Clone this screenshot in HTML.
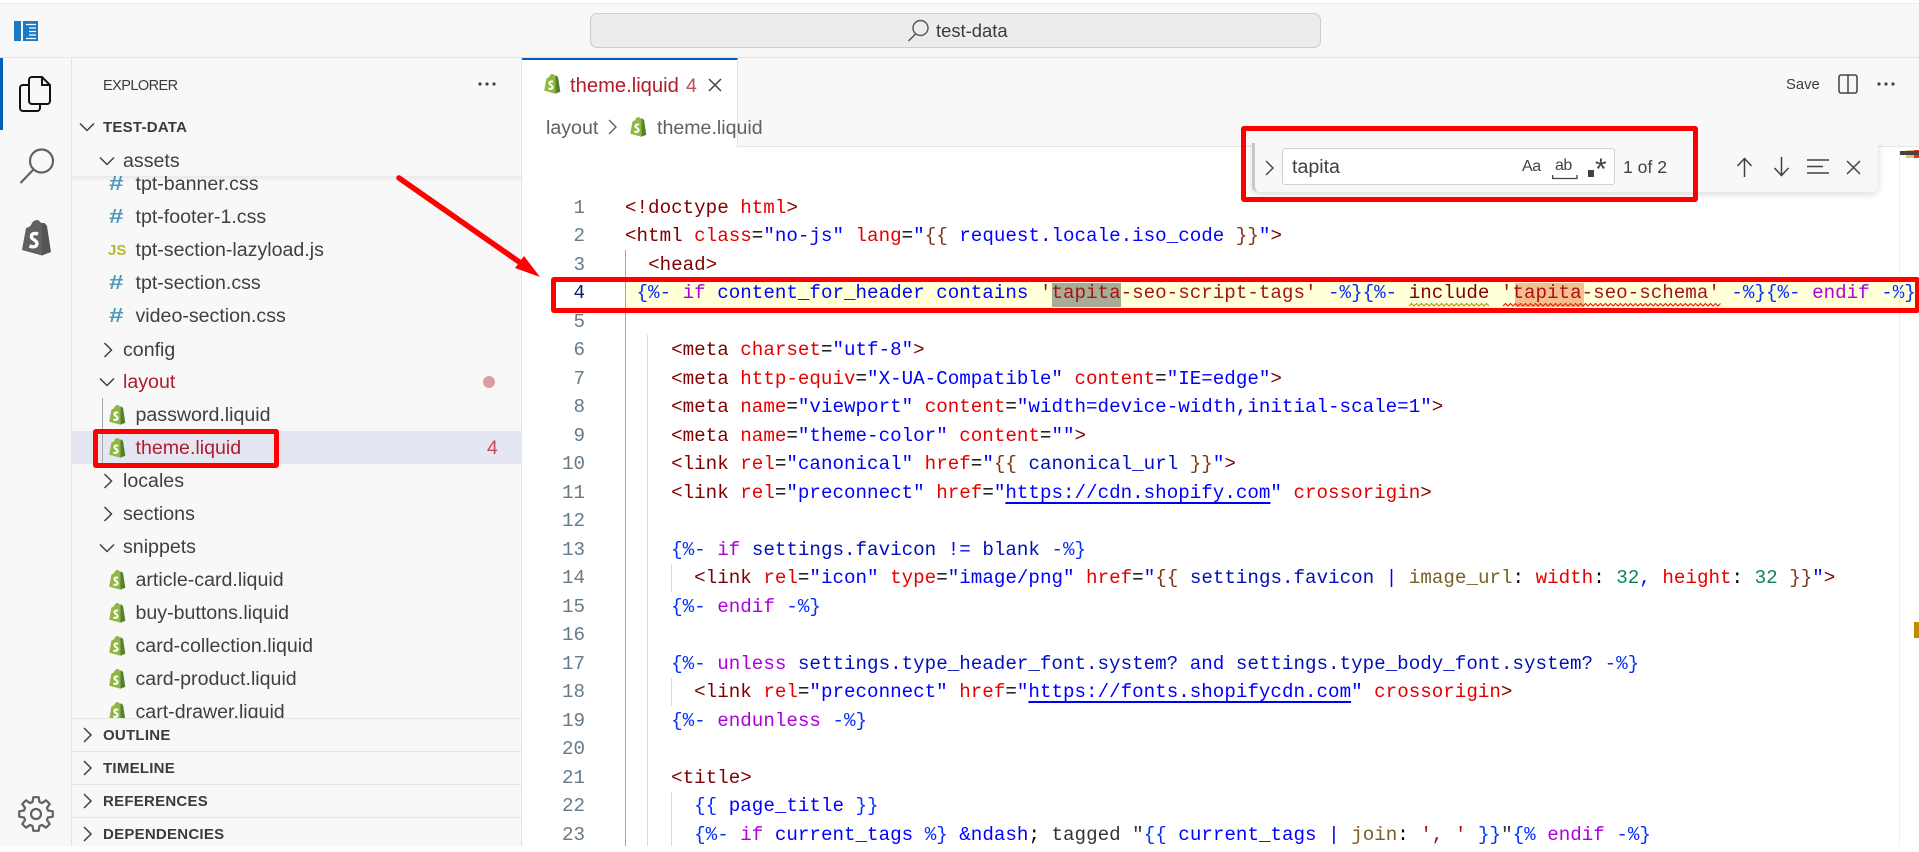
<!DOCTYPE html>
<html lang="en"><head><meta charset="utf-8"><title>test-data</title>
<style>
*{box-sizing:border-box}
html,body{margin:0;padding:0;width:1919px;height:846px;overflow:hidden;background:#fff;font-family:"Liberation Sans",sans-serif;color:#3b3b3b}
.a{position:absolute}
svg{position:absolute;overflow:visible}
.r{position:absolute;height:33px;line-height:35px;font-size:19.6px;white-space:pre;color:#3f3f3f}
.f{left:135.5px}.d{left:123px}
.red{color:#b01b2e}
.h{position:absolute;left:103px;height:33px;line-height:35px;font-size:15px;font-weight:bold;letter-spacing:.25px;color:#3b3b3b}
.hash{position:absolute;left:109px;height:33px;line-height:34px;font-size:20px;font-weight:bold;color:#519aba;transform:scaleX(1.3);transform-origin:left center}
.box{position:absolute;border:5px solid #f00;border-radius:3px}
.sec{position:absolute;left:72px;width:449px;height:33px;background:#f8f8f8;border-top:1px solid #e5e5e5}
#code,#nums{position:absolute;top:193.8px;font-family:"Liberation Mono",monospace;font-size:19.22px;line-height:28.5px;white-space:pre}
#code{left:625px;color:#000}
#nums{left:530px;width:55px;text-align:right;color:#667a88}
#code div,#nums div{height:28.5px}
.t{color:#800000}.e{color:#e50000}.s{color:#0000ff}.b{color:#0431fa}.k{color:#af00db}.v{color:#0010b8}.w{color:#7b3814}.q{color:#a31515}.n{color:#098658}.y{color:#795e26}
.u{text-decoration:underline;text-decoration-thickness:2px;text-underline-offset:4px}
.g{position:absolute;width:1px}
</style></head><body>

<!-- title bar -->
<div class="a" style="left:0;top:0;width:1919px;height:58px;background:#f8f8f8;border-bottom:1px solid #e5e5e5"></div>
<div class="a" style="left:0;top:0;width:1919px;height:3px;background:#fff"></div>
<div class="a" style="left:0;top:3px;width:1919px;height:1px;background:#fbe4ec"></div>
<svg style="left:14px;top:21px" width="24" height="20" viewBox="0 0 24 20"><rect width="7" height="20" fill="#1a7bc4"/><rect x="9" width="15" height="20" fill="#1a7bc4"/><path d="M12 3.5h10M15 7h7M15 10.5h7M15 14h7M12 17.5h10" stroke="#fff" stroke-width="1.2"/></svg>
<div class="a" style="left:590px;top:13px;width:731px;height:35px;background:#ececec;border:1px solid #cdcdcd;border-radius:7px"></div>
<svg style="left:905px;top:18px" width="28" height="26" viewBox="0 0 28 26"><circle cx="15.5" cy="10" r="7.5" fill="none" stroke="#555" stroke-width="1.4"/><path d="M10.5 16L3.5 23" stroke="#555" stroke-width="1.5"/></svg>
<div class="a" style="left:936px;top:13px;height:35px;line-height:36px;font-size:18.4px;color:#3b3b3b">test-data</div>

<!-- activity bar -->
<div class="a" style="left:0;top:58px;width:72px;height:788px;background:#f8f8f8;border-right:1px solid #e5e5e5"></div>
<div class="a" style="left:0;top:58px;width:3px;height:72px;background:#005fb8"></div>
<svg style="left:19px;top:76px" width="32" height="36" viewBox="0 0 32 36" fill="none" stroke="#111" stroke-width="2"><path d="M10 9H4a3 3 0 0 0-3 3V32a3 3 0 0 0 3 3H18a3 3 0 0 0 3-3V28"/><path d="M13 1H23L31 9V25a3 3 0 0 1-3 3H13a3 3 0 0 1-3-3V4a3 3 0 0 1 3-3Z"/><path d="M23 1V9H31"/></svg>
<svg style="left:19px;top:147px" width="36" height="38" viewBox="0 0 36 38" fill="none" stroke="#616161" stroke-width="2.2"><circle cx="22.5" cy="14" r="11.5"/><path d="M14 23L1.5 36"/></svg>
<svg style="left:21px;top:220px" width="30" height="36" viewBox="0 0 30 36"><path d="M1 30L5 8Q9 7 10 5Q12 0 16 0Q18 0 19 2L21 3V35.5Z" fill="#616161"/><path d="M21 3H23.5L26 6L30 32L21 35.5Z" fill="#555"/><path d="M17 14C13 12.5 10 14 10.5 17C11 20 16 20 16 23.5C16 27 12 27.5 8.5 26" fill="none" stroke="#fff" stroke-width="3.4"/></svg>
<svg style="left:18px;top:796px" width="36" height="36" viewBox="-18 -18 36 36" fill="none" stroke="#616161" stroke-width="2.2" stroke-linejoin="round"><path d="M12.02-3.45L16.79-2.66V2.66L12.02 3.45L10.93 6.06L13.75 9.99L9.99 13.75L6.06 10.93L3.45 12.02L2.66 16.79H-2.66L-3.45 12.02L-6.06 10.93L-9.99 13.75L-13.75 9.99L-10.93 6.06L-12.02 3.45L-16.79 2.66V-2.66L-12.02-3.45L-10.93-6.06L-13.75-9.99L-9.99-13.75L-6.06-10.93L-3.45-12.02L-2.66-16.79H2.66L3.45-12.02L6.06-10.93L9.99-13.75L13.75-9.99L10.93-6.06Z"/><circle r="5"/></svg>

<!-- sidebar -->
<div class="a" style="left:72px;top:58px;width:450px;height:788px;background:#f8f8f8;border-right:1px solid #e5e5e5"></div>
<div class="a" style="left:103px;top:68px;height:33px;line-height:36px;font-size:14.5px;letter-spacing:-.55px;color:#3b3b3b">EXPLORER</div>
<svg style="left:477px;top:81px" width="20" height="6"><circle cx="3" cy="3" r="1.6" fill="#424242"/><circle cx="10" cy="3" r="1.6" fill="#424242"/><circle cx="17" cy="3" r="1.6" fill="#424242"/></svg>

<div class="r f" style="top:167px">tpt-banner.css</div>
<div class="hash" style="top:167px">#</div>
<div class="r f" style="top:200px">tpt-footer-1.css</div>
<div class="hash" style="top:200px">#</div>
<div class="r f" style="top:233px">tpt-section-lazyload.js</div>
<div class="a" style="left:108px;top:234px;height:33px;line-height:33px;font-size:15px;font-weight:bold;color:#b8b82e">JS</div>
<div class="r f" style="top:266px">tpt-section.css</div>
<div class="hash" style="top:266px">#</div>
<div class="r f" style="top:299px">video-section.css</div>
<div class="hash" style="top:299px">#</div>

<!-- sticky header -->
<div class="a" style="left:72px;top:110px;width:449px;height:66px;background:#f8f8f8"></div>
<div class="a" style="left:72px;top:176px;width:449px;height:6px;background:linear-gradient(#0000000f,#00000000)"></div>
<div class="h" style="top:109.5px">TEST-DATA</div>
<svg style="left:79px;top:122px" width="16" height="10" fill="none" stroke="#424242" stroke-width="1.5"><path d="M1 1.5L8 8.5L15 1.5"/></svg>
<div class="r d" style="top:144px">assets</div>
<svg style="left:99px;top:156px" width="16" height="10" fill="none" stroke="#424242" stroke-width="1.5"><path d="M1 1.5L8 8.5L15 1.5"/></svg>

<div class="r d" style="top:333px">config</div>
<svg style="left:103px;top:342px" width="10" height="16" fill="none" stroke="#424242" stroke-width="1.5"><path d="M1.5 1L8.5 8L1.5 15"/></svg>
<div class="r d red" style="top:365px">layout</div>
<svg style="left:99px;top:377px" width="16" height="10" fill="none" stroke="#424242" stroke-width="1.5"><path d="M1 1.5L8 8.5L15 1.5"/></svg>
<div class="a" style="left:483px;top:375.5px;width:12px;height:12px;border-radius:50%;background:#dd9ca0"></div>

<div class="a" style="left:72px;top:431px;width:449px;height:33px;background:#e4e6f1"></div>
<div class="a" style="left:102px;top:398px;width:1px;height:67px;background:#a8a8a8"></div>
<div class="r f" style="top:398px">password.liquid</div>
<div class="r f red" style="top:431px">theme.liquid</div>
<div class="a" style="left:487px;top:431px;height:33px;line-height:35px;font-size:19.5px;color:#c24a52">4</div>
<svg style="left:108px;top:405px" width="18" height="20" viewBox="0 0 30 36"><path d="M1 30L5 8Q9 7 10 5Q12 0 16 0Q18 0 19 2L21 3V35.5Z" fill="#8fb83f"/><path d="M21 3H23.5L26 6L30 32L21 35.5Z" fill="#55802f"/><path d="M17 14C13 12.5 10 14 10.5 17C11 20 16 20 16 23.5C16 27 12 27.5 8.5 26" fill="none" stroke="#fff" stroke-width="3.6"/></svg>
<svg style="left:108px;top:438px" width="18" height="20" viewBox="0 0 30 36"><path d="M1 30L5 8Q9 7 10 5Q12 0 16 0Q18 0 19 2L21 3V35.5Z" fill="#8fb83f"/><path d="M21 3H23.5L26 6L30 32L21 35.5Z" fill="#55802f"/><path d="M17 14C13 12.5 10 14 10.5 17C11 20 16 20 16 23.5C16 27 12 27.5 8.5 26" fill="none" stroke="#fff" stroke-width="3.6"/></svg>

<div class="r d" style="top:464px">locales</div>
<svg style="left:103px;top:473px" width="10" height="16" fill="none" stroke="#424242" stroke-width="1.5"><path d="M1.5 1L8.5 8L1.5 15"/></svg>
<div class="r d" style="top:497px">sections</div>
<svg style="left:103px;top:506px" width="10" height="16" fill="none" stroke="#424242" stroke-width="1.5"><path d="M1.5 1L8.5 8L1.5 15"/></svg>
<div class="r d" style="top:530px">snippets</div>
<svg style="left:99px;top:543px" width="16" height="10" fill="none" stroke="#424242" stroke-width="1.5"><path d="M1 1.5L8 8.5L15 1.5"/></svg>

<div class="r f" style="top:563px">article-card.liquid</div>
<div class="r f" style="top:596px">buy-buttons.liquid</div>
<div class="r f" style="top:629px">card-collection.liquid</div>
<div class="r f" style="top:662px">card-product.liquid</div>
<div class="r f" style="top:695px">cart-drawer.liquid</div>
<svg style="left:108px;top:570px" width="18" height="20" viewBox="0 0 30 36"><path d="M1 30L5 8Q9 7 10 5Q12 0 16 0Q18 0 19 2L21 3V35.5Z" fill="#8fb83f"/><path d="M21 3H23.5L26 6L30 32L21 35.5Z" fill="#55802f"/><path d="M17 14C13 12.5 10 14 10.5 17C11 20 16 20 16 23.5C16 27 12 27.5 8.5 26" fill="none" stroke="#fff" stroke-width="3.6"/></svg>
<svg style="left:108px;top:603px" width="18" height="20" viewBox="0 0 30 36"><path d="M1 30L5 8Q9 7 10 5Q12 0 16 0Q18 0 19 2L21 3V35.5Z" fill="#8fb83f"/><path d="M21 3H23.5L26 6L30 32L21 35.5Z" fill="#55802f"/><path d="M17 14C13 12.5 10 14 10.5 17C11 20 16 20 16 23.5C16 27 12 27.5 8.5 26" fill="none" stroke="#fff" stroke-width="3.6"/></svg>
<svg style="left:108px;top:636px" width="18" height="20" viewBox="0 0 30 36"><path d="M1 30L5 8Q9 7 10 5Q12 0 16 0Q18 0 19 2L21 3V35.5Z" fill="#8fb83f"/><path d="M21 3H23.5L26 6L30 32L21 35.5Z" fill="#55802f"/><path d="M17 14C13 12.5 10 14 10.5 17C11 20 16 20 16 23.5C16 27 12 27.5 8.5 26" fill="none" stroke="#fff" stroke-width="3.6"/></svg>
<svg style="left:108px;top:669px" width="18" height="20" viewBox="0 0 30 36"><path d="M1 30L5 8Q9 7 10 5Q12 0 16 0Q18 0 19 2L21 3V35.5Z" fill="#8fb83f"/><path d="M21 3H23.5L26 6L30 32L21 35.5Z" fill="#55802f"/><path d="M17 14C13 12.5 10 14 10.5 17C11 20 16 20 16 23.5C16 27 12 27.5 8.5 26" fill="none" stroke="#fff" stroke-width="3.6"/></svg>
<svg style="left:108px;top:702px" width="18" height="20" viewBox="0 0 30 36"><path d="M1 30L5 8Q9 7 10 5Q12 0 16 0Q18 0 19 2L21 3V35.5Z" fill="#8fb83f"/><path d="M21 3H23.5L26 6L30 32L21 35.5Z" fill="#55802f"/><path d="M17 14C13 12.5 10 14 10.5 17C11 20 16 20 16 23.5C16 27 12 27.5 8.5 26" fill="none" stroke="#fff" stroke-width="3.6"/></svg>

<!-- collapsed sections -->
<div class="sec" style="top:718px"></div>
<div class="sec" style="top:751px"></div>
<div class="sec" style="top:784px"></div>
<div class="sec" style="top:817px;height:29px"></div>
<div class="h" style="top:718px">OUTLINE</div>
<div class="h" style="top:751px">TIMELINE</div>
<div class="h" style="top:784px">REFERENCES</div>
<div class="h" style="top:817px">DEPENDENCIES</div>
<svg style="left:83px;top:727px" width="9" height="16" fill="none" stroke="#424242" stroke-width="1.5"><path d="M1 1L8 8L1 15"/></svg>
<svg style="left:83px;top:760px" width="9" height="16" fill="none" stroke="#424242" stroke-width="1.5"><path d="M1 1L8 8L1 15"/></svg>
<svg style="left:83px;top:793px" width="9" height="16" fill="none" stroke="#424242" stroke-width="1.5"><path d="M1 1L8 8L1 15"/></svg>
<svg style="left:83px;top:826px" width="9" height="16" fill="none" stroke="#424242" stroke-width="1.5"><path d="M1 1L8 8L1 15"/></svg>

<!-- tab bar -->
<div class="a" style="left:522px;top:58px;width:1397px;height:89px;background:#f8f8f8;border-bottom:1px solid #e5e5e5"></div>
<div class="a" style="left:522px;top:58px;width:216px;height:89px;background:#fff;border-top:2px solid #005fb8;border-right:1px solid #e5e5e5"></div>
<svg style="left:543px;top:74px" width="18" height="20" viewBox="0 0 30 36"><path d="M1 30L5 8Q9 7 10 5Q12 0 16 0Q18 0 19 2L21 3V35.5Z" fill="#8fb83f"/><path d="M21 3H23.5L26 6L30 32L21 35.5Z" fill="#55802f"/><path d="M17 14C13 12.5 10 14 10.5 17C11 20 16 20 16 23.5C16 27 12 27.5 8.5 26" fill="none" stroke="#fff" stroke-width="3.6"/></svg>
<div class="a red" style="left:570px;top:68px;height:33px;line-height:36px;font-size:20.2px">theme.liquid</div>
<div class="a" style="left:686px;top:68px;height:33px;line-height:36px;font-size:19.5px;color:#c24a52">4</div>
<svg style="left:708px;top:78px" width="14" height="14" fill="none" stroke="#424242" stroke-width="1.5"><path d="M1 1L13 13M13 1L1 13"/></svg>
<div class="a" style="left:1786px;top:68px;height:33px;line-height:35px;font-size:14.8px;color:#3b3b3b">Save</div>
<svg style="left:1838px;top:74px" width="20" height="20" fill="none" stroke="#424242" stroke-width="1.5"><rect x="1" y="1" width="18" height="18" rx="2"/><path d="M10 1V19"/></svg>
<svg style="left:1876px;top:81px" width="20" height="6"><circle cx="3" cy="3" r="1.6" fill="#424242"/><circle cx="10" cy="3" r="1.6" fill="#424242"/><circle cx="17" cy="3" r="1.6" fill="#424242"/></svg>

<!-- breadcrumbs -->
<div class="a" style="left:546px;top:111px;height:33px;line-height:35px;font-size:19.6px;color:#616161">layout</div>
<svg style="left:608px;top:119px" width="9" height="16" fill="none" stroke="#616161" stroke-width="1.4"><path d="M1 1L8 8L1 15"/></svg>
<svg style="left:629px;top:117px" width="18" height="20" viewBox="0 0 30 36"><path d="M1 30L5 8Q9 7 10 5Q12 0 16 0Q18 0 19 2L21 3V35.5Z" fill="#8fb83f"/><path d="M21 3H23.5L26 6L30 32L21 35.5Z" fill="#55802f"/><path d="M17 14C13 12.5 10 14 10.5 17C11 20 16 20 16 23.5C16 27 12 27.5 8.5 26" fill="none" stroke="#fff" stroke-width="3.6"/></svg>
<div class="a" style="left:657px;top:111px;height:33px;line-height:35px;font-size:19.6px;color:#616161">theme.liquid</div>

<!-- editor -->
<div class="a" style="left:625px;top:282px;width:1294px;height:26px;background:#ffffd8"></div>
<div class="a" style="left:1052px;top:283px;width:69px;height:24px;background:#a9ac94"></div>
<div class="a" style="left:1515px;top:283px;width:69px;height:24px;background:#f6be8c"></div>

<div class="g" style="left:625px;top:250px;height:596px;background:#a6a6a6"></div>
<div class="g" style="left:647px;top:335px;height:511px;background:#d9d9d9"></div>
<div class="g" style="left:671px;top:564px;height:28px;background:#d9d9d9"></div>
<div class="g" style="left:671px;top:678px;height:28px;background:#d9d9d9"></div>
<div class="g" style="left:671px;top:792px;height:54px;background:#d9d9d9"></div>

<div id="nums"><div>1</div><div>2</div><div>3</div><div style="color:#0b216f">4</div><div>5</div><div>6</div><div>7</div><div>8</div><div>9</div><div>10</div><div>11</div><div>12</div><div>13</div><div>14</div><div>15</div><div>16</div><div>17</div><div>18</div><div>19</div><div>20</div><div>21</div><div>22</div><div>23</div></div>

<div id="code"><div><span class="t">&lt;!doctype</span> <span class="e">html</span><span class="t">&gt;</span></div><div><span class="t">&lt;html</span> <span class="e">class</span>=<span class="s">"no-js"</span> <span class="e">lang</span>=<span class="s">"</span><span class="w">{{</span> <span class="s">request.locale.iso_code</span> <span class="w">}}</span><span class="s">"</span><span class="t">&gt;</span></div><div>  <span class="t">&lt;head&gt;</span></div><div> <span class="b">{%-</span> <span class="k">if</span> <span class="s">content_for_header contains</span> <span class="q">'tapita-seo-script-tags'</span> <span class="b">-%}{%-</span> <span class="t">include</span> <span class="q">'tapita-seo-schema'</span> <span class="b">-%}{%-</span> <span class="k">endif</span> <span class="b">-%}</span></div><div></div><div>    <span class="t">&lt;meta</span> <span class="e">charset</span>=<span class="s">"utf-8"</span><span class="t">&gt;</span></div><div>    <span class="t">&lt;meta</span> <span class="e">http-equiv</span>=<span class="s">"X-UA-Compatible"</span> <span class="e">content</span>=<span class="s">"IE=edge"</span><span class="t">&gt;</span></div><div>    <span class="t">&lt;meta</span> <span class="e">name</span>=<span class="s">"viewport"</span> <span class="e">content</span>=<span class="s">"width=device-width,initial-scale=1"</span><span class="t">&gt;</span></div><div>    <span class="t">&lt;meta</span> <span class="e">name</span>=<span class="s">"theme-color"</span> <span class="e">content</span>=<span class="s">""</span><span class="t">&gt;</span></div><div>    <span class="t">&lt;link</span> <span class="e">rel</span>=<span class="s">"canonical"</span> <span class="e">href</span>=<span class="s">"</span><span class="w">{{</span> <span class="v">canonical_url</span> <span class="w">}}</span><span class="s">"</span><span class="t">&gt;</span></div><div>    <span class="t">&lt;link</span> <span class="e">rel</span>=<span class="s">"preconnect"</span> <span class="e">href</span>=<span class="s">"<span class="u">https://cdn.shopify.com</span>"</span> <span class="e">crossorigin</span><span class="t">&gt;</span></div><div></div><div>    <span class="b">{%-</span> <span class="k">if</span> <span class="v">settings.favicon</span> <span class="s">!=</span> <span class="v">blank</span> <span class="b">-%}</span></div><div>      <span class="t">&lt;link</span> <span class="e">rel</span>=<span class="s">"icon"</span> <span class="e">type</span>=<span class="s">"image/png"</span> <span class="e">href</span>=<span class="s">"</span><span class="w">{{</span> <span class="v">settings.favicon</span> <span class="s">|</span> <span class="y">image_url</span>: <span class="e">width</span>: <span class="n">32</span><span class="s">,</span> <span class="e">height</span>: <span class="n">32</span> <span class="w">}}</span><span class="s">"</span><span class="t">&gt;</span></div><div>    <span class="b">{%-</span> <span class="k">endif</span> <span class="b">-%}</span></div><div></div><div>    <span class="b">{%-</span> <span class="k">unless</span> <span class="v">settings.type_header_font.system?</span> <span class="s">and</span> <span class="v">settings.type_body_font.system?</span> <span class="b">-%}</span></div><div>      <span class="t">&lt;link</span> <span class="e">rel</span>=<span class="s">"preconnect"</span> <span class="e">href</span>=<span class="s">"<span class="u">https://fonts.shopifycdn.com</span>"</span> <span class="e">crossorigin</span><span class="t">&gt;</span></div><div>    <span class="b">{%-</span> <span class="k">endunless</span> <span class="b">-%}</span></div><div></div><div>    <span class="t">&lt;title&gt;</span></div><div>      <span class="b">{{</span> <span class="s">page_title</span> <span class="b">}}</span></div><div>      <span class="b">{%-</span> <span class="k">if</span> <span class="s">current_tags</span> <span class="b">%}</span> <span class="s">&amp;ndash</span>; <span style="color:#333">tagged "</span><span class="b">{{</span> <span class="s">current_tags</span> <span class="s">|</span> <span class="y">join</span>: <span class="q">', '</span> <span class="b">}}</span><span style="color:#333">"</span><span class="b">{%</span> <span class="k">endif</span> <span class="b">-%}</span></div></div>

<!-- squiggles -->
<svg style="left:1409px;top:303px" width="82" height="4"><path d="M0 3 L2.5 0.5 L5 3 L7.5 0.5 L10 3 L12.5 0.5 L15 3 L17.5 0.5 L20 3 L22.5 0.5 L25 3 L27.5 0.5 L30 3 L32.5 0.5 L35 3 L37.5 0.5 L40 3 L42.5 0.5 L45 3 L47.5 0.5 L50 3 L52.5 0.5 L55 3 L57.5 0.5 L60 3 L62.5 0.5 L65 3 L67.5 0.5 L70 3 L72.5 0.5 L75 3 L77.5 0.5 L80 3" fill="none" stroke="#bf8803" stroke-width="1"/></svg>
<svg style="left:1503px;top:303px" width="220" height="4"><path d="M0 3 L2.5 0.5 L5 3 L7.5 0.5 L10 3 L12.5 0.5 L15 3 L17.5 0.5 L20 3 L22.5 0.5 L25 3 L27.5 0.5 L30 3 L32.5 0.5 L35 3 L37.5 0.5 L40 3 L42.5 0.5 L45 3 L47.5 0.5 L50 3 L52.5 0.5 L55 3 L57.5 0.5 L60 3 L62.5 0.5 L65 3 L67.5 0.5 L70 3 L72.5 0.5 L75 3 L77.5 0.5 L80 3 L82.5 0.5 L85 3 L87.5 0.5 L90 3 L92.5 0.5 L95 3 L97.5 0.5 L100 3 L102.5 0.5 L105 3 L107.5 0.5 L110 3 L112.5 0.5 L115 3 L117.5 0.5 L120 3 L122.5 0.5 L125 3 L127.5 0.5 L130 3 L132.5 0.5 L135 3 L137.5 0.5 L140 3 L142.5 0.5 L145 3 L147.5 0.5 L150 3 L152.5 0.5 L155 3 L157.5 0.5 L160 3 L162.5 0.5 L165 3 L167.5 0.5 L170 3 L172.5 0.5 L175 3 L177.5 0.5 L180 3 L182.5 0.5 L185 3 L187.5 0.5 L190 3 L192.5 0.5 L195 3 L197.5 0.5 L200 3 L202.5 0.5 L205 3 L207.5 0.5 L210 3 L212.5 0.5 L215 3 L217.5 0.5" fill="none" stroke="#e51400" stroke-width="1"/></svg>

<!-- overview ruler -->
<div class="a" style="left:1899px;top:143px;width:1px;height:703px;background:#efefef"></div>
<div class="a" style="left:1906px;top:150px;width:8px;height:8px;background:#e0c388"></div>
<div class="a" style="left:1914px;top:150px;width:5px;height:8px;background:#e5321a"></div>
<div class="a" style="left:1900px;top:151px;width:19px;height:4px;background:#4a4440"></div>
<div class="a" style="left:1914px;top:622px;width:5px;height:16px;background:#c08a00"></div>

<!-- find widget -->
<div class="a" style="left:1252px;top:143px;width:626px;height:49px;background:#f8f8f8;border-left:3px solid #c8c8c8;border-radius:0 0 6px 6px;box-shadow:0 2px 8px #00000028;clip-path:inset(0 -20px -20px -20px)"></div>
<svg style="left:1265px;top:160px" width="9" height="16" fill="none" stroke="#424242" stroke-width="1.4"><path d="M1 1L8 8L1 15"/></svg>
<div class="a" style="left:1282px;top:148px;width:333px;height:37px;background:#fff;border:1px solid #d0d0d0;border-radius:3px"></div>
<div class="a" style="left:1292px;top:150px;height:33px;line-height:35px;font-size:19.6px;color:#3f3f3f">tapita</div>
<div class="a" style="left:1522px;top:150px;height:33px;line-height:34px;font-size:16px;letter-spacing:-.4px;color:#424242">Aa</div>
<div class="a" style="left:1555px;top:149px;height:33px;line-height:34px;font-size:16px;letter-spacing:-.5px;color:#424242">ab</div>
<svg style="left:1552px;top:175px" width="26" height="5" fill="none" stroke="#424242" stroke-width="1.3"><path d="M.7 0V3.5H25V0"/></svg>
<div class="a" style="left:1588px;top:170px;width:6px;height:7px;background:#424242"></div>
<div class="a" style="left:1595px;top:155px;height:30px;line-height:30px;font-size:30px;color:#424242">*</div>
<div class="a" style="left:1623px;top:151px;height:33px;line-height:33px;font-size:17.6px;color:#424242">1 of 2</div>
<svg style="left:1736px;top:157px" width="17" height="20" fill="none" stroke="#424242" stroke-width="1.5"><path d="M8.5 20V2M1.5 9L8.5 1.5L15.5 9"/></svg>
<svg style="left:1773px;top:157px" width="17" height="20" fill="none" stroke="#424242" stroke-width="1.5"><path d="M8.5 0V18M1.5 11L8.5 18.5L15.5 11"/></svg>
<svg style="left:1807px;top:158px" width="22" height="17" fill="none" stroke="#424242" stroke-width="1.5"><path d="M0 2H22M0 8.5H16M0 15H22"/></svg>
<svg style="left:1846px;top:160px" width="15" height="15" fill="none" stroke="#424242" stroke-width="1.5"><path d="M1 1L14 14M14 1L1 14"/></svg>

<!-- annotations -->
<div class="box" style="left:1241px;top:126px;width:457px;height:76px"></div>
<div class="box" style="left:551px;top:277px;width:1369px;height:36px"></div>
<div class="box" style="left:93px;top:429px;width:186px;height:39px"></div>
<svg style="left:0;top:0" width="1919" height="846"><path d="M399 178L525 266" stroke="#f00" stroke-width="5.5" stroke-linecap="round"/><path d="M540 277L515 268L524 256Z" fill="#f00"/></svg>
</body></html>
